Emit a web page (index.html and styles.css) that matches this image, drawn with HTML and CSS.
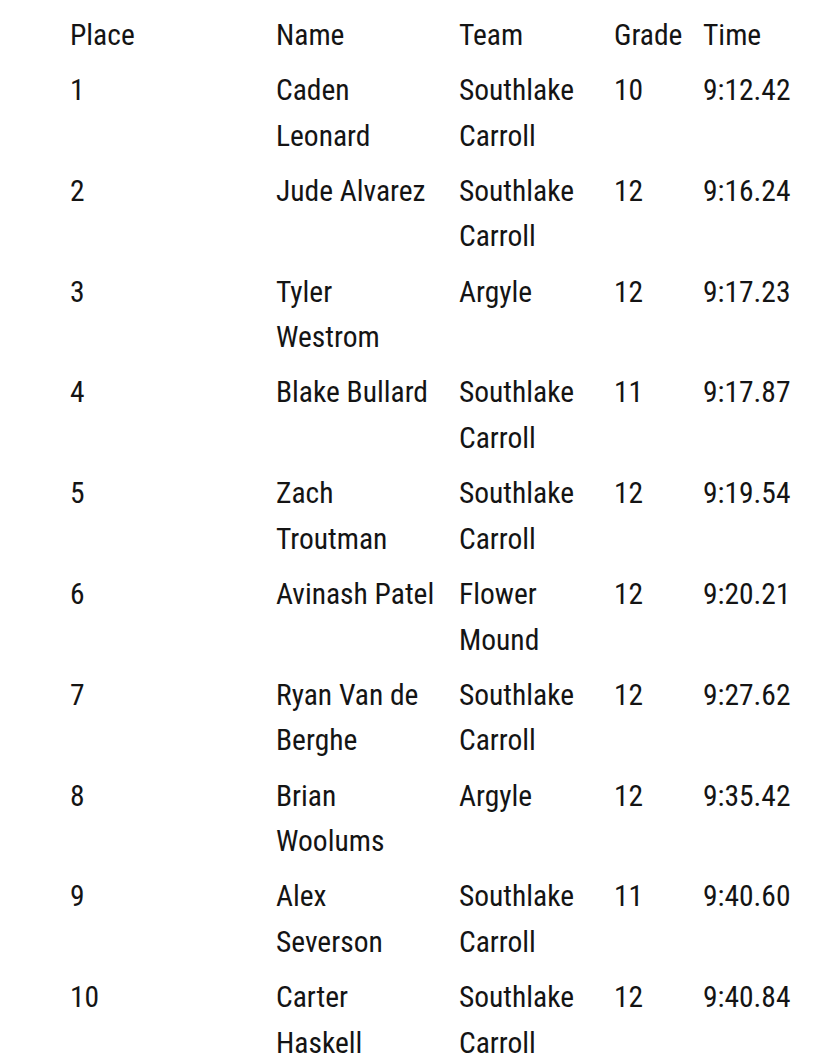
FILE: index.html
```html
<!DOCTYPE html>
<html>
<head>
<meta charset="utf-8">
<link rel="stylesheet" href="styles.css">
</head>
<body>
<table class="results">
<thead>
<tr><th class="c-place">Place</th><th class="c-name">Name</th><th class="c-team">Team</th><th class="c-grade">Grade</th><th class="c-time">Time</th></tr>
</thead>
<tbody>
<tr><td>1</td><td>Caden Leonard</td><td>Southlake Carroll</td><td>10</td><td>9:12.42</td></tr>
<tr><td>2</td><td>Jude Alvarez</td><td>Southlake Carroll</td><td>12</td><td>9:16.24</td></tr>
<tr><td>3</td><td>Tyler Westrom</td><td>Argyle</td><td>12</td><td>9:17.23</td></tr>
<tr><td>4</td><td>Blake Bullard</td><td>Southlake Carroll</td><td>11</td><td>9:17.87</td></tr>
<tr><td>5</td><td>Zach Troutman</td><td>Southlake Carroll</td><td>12</td><td>9:19.54</td></tr>
<tr><td>6</td><td>Avinash Patel</td><td>Flower Mound</td><td>12</td><td>9:20.21</td></tr>
<tr><td>7</td><td>Ryan Van de Berghe</td><td>Southlake Carroll</td><td>12</td><td>9:27.62</td></tr>
<tr><td>8</td><td>Brian Woolums</td><td>Argyle</td><td>12</td><td>9:35.42</td></tr>
<tr><td>9</td><td>Alex Severson</td><td>Southlake Carroll</td><td>11</td><td>9:40.60</td></tr>
<tr><td>10</td><td>Carter Haskell</td><td>Southlake Carroll</td><td>12</td><td>9:40.84</td></tr>
</tbody>
</table>
</body>
</html>
```
FILE: styles.css
```css
html, body {
  margin: 0;
  padding: 0;
  background: #ffffff;
}
body {
  padding: 8px 0 0 70px;
  font-family: "Roboto Condensed", Roboto, sans-serif;
  font-stretch: condensed;
  font-size: 29.5px;
  color: #141414;
}
.results {
  border-collapse: collapse;
  table-layout: fixed;
  width: 751px;
}
.results th,
.results td {
  box-sizing: border-box;
  font-weight: 400;
  text-align: left;
  vertical-align: top;
  line-height: 45.65px;
  padding: 4.75px 8px 4.75px 0;
}
.results td:nth-child(2) {
  padding-right: 22px;
}
.c-place { width: 206px; }
.c-name { width: 183px; }
.c-team { width: 155px; }
.c-grade { width: 89px; }
.c-time { width: 118px; }
```
